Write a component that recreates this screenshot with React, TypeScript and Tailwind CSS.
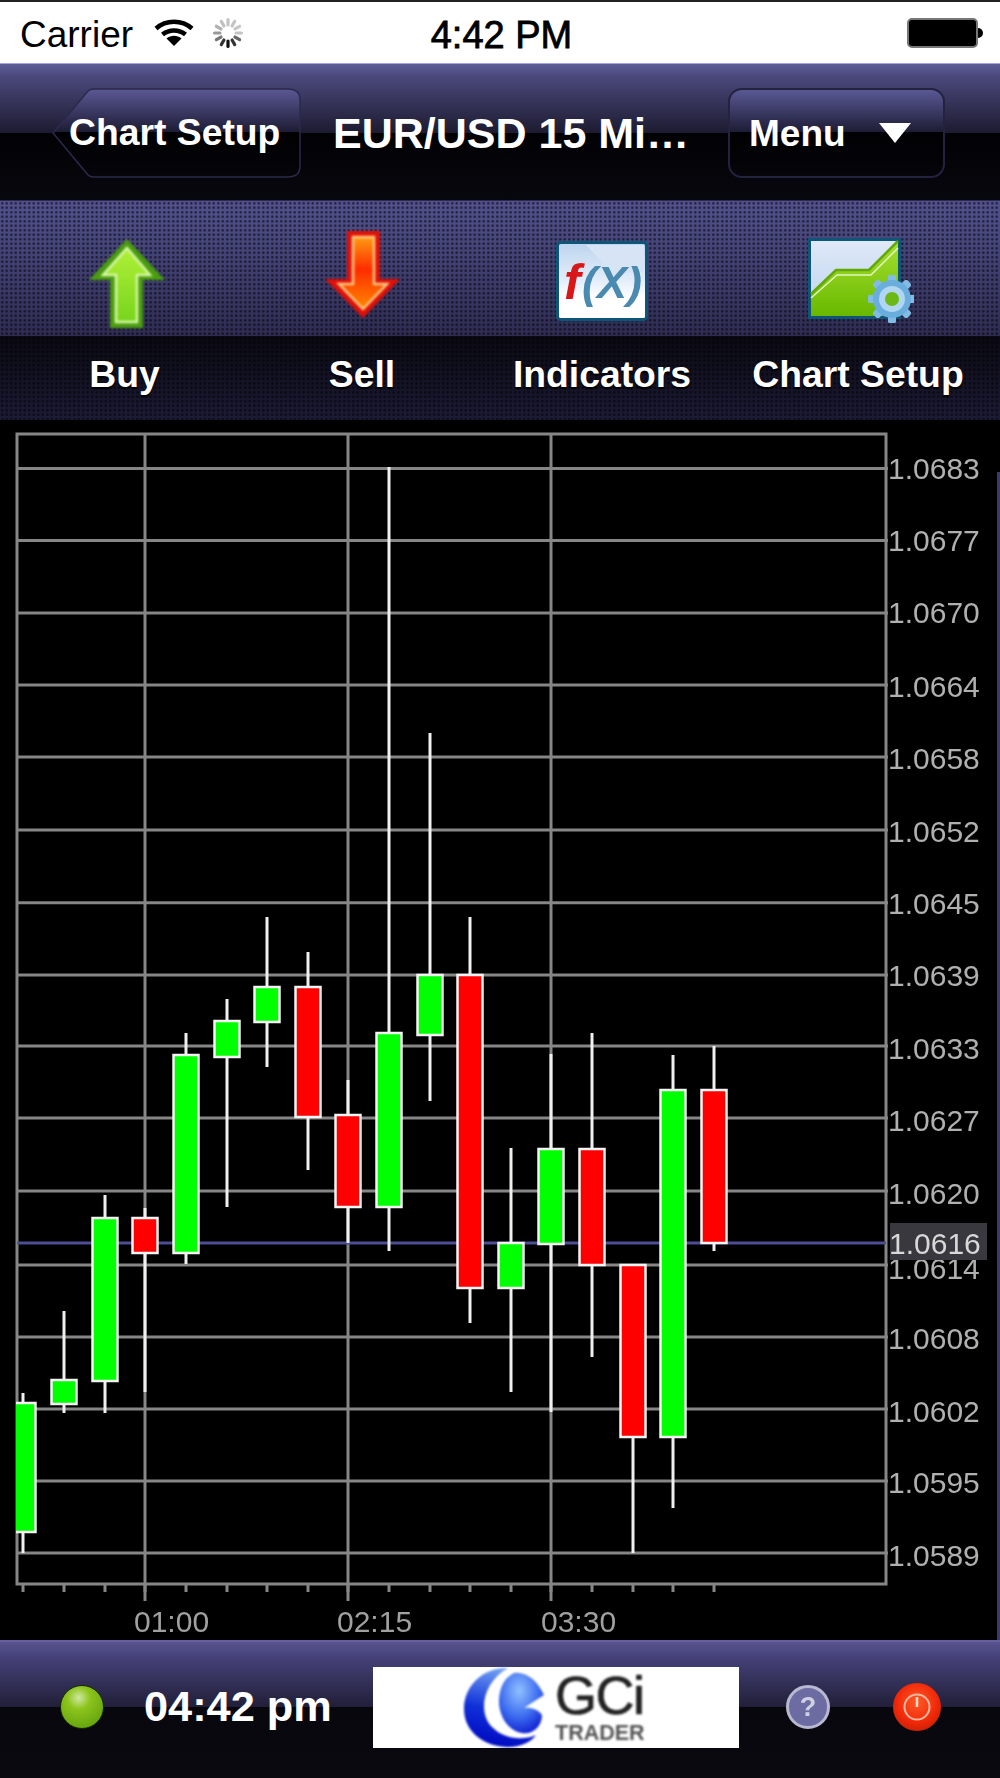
// label, line y, label baseline y
const LEVELS: [string, number, number][] = [
  ['1.0683', 468.5, 479],
  ['1.0677', 540.5, 551],
  ['1.0670', 613, 623],
  ['1.0664', 685, 697],
  ['1.0658', 757, 769],
  ['1.0652', 830, 841.5],
  ['1.0645', 902.7, 913.5],
  ['1.0639', 975, 986],
  ['1.0633', 1046, 1059],
  ['1.0627', 1118, 1131],
  ['1.0620', 1191, 1204],
  ['1.0614', 1265, 1279],
  ['1.0608', 1337, 1349],
  ['1.0602', 1409, 1422],
  ['1.0595', 1481, 1493],
  ['1.0589', 1553, 1566],
];

const TICKS = [23, 64, 105, 145, 186, 227, 267, 308, 348, 389, 430, 470, 511, 551, 592, 633, 673, 714];

// x, body top, body bottom, wick top, wick bottom, rising
const CANDLES: [number, number, number, number, number, boolean][] = [
  [23, 1403, 1532, 1393, 1553, true],
  [64, 1380, 1404, 1311, 1413, true],
  [105, 1218, 1381, 1195, 1413, true],
  [145, 1218, 1253, 1208, 1392, false],
  [186, 1055, 1253, 1033, 1264, true],
  [227, 1021, 1057, 999, 1207, true],
  [267, 987, 1022, 917, 1067, true],
  [308, 987, 1117, 952, 1170, false],
  [348, 1115, 1207, 1080, 1243, false],
  [389, 1033, 1207, 467, 1251, true],
  [430, 975, 1035, 733, 1101, true],
  [470, 975, 1288, 917, 1323, false],
  [511, 1243, 1288, 1148, 1392, true],
  [551, 1149, 1244, 1054, 1412, true],
  [592, 1149, 1265, 1033, 1357, false],
  [633, 1265, 1437, 1265, 1553, false],
  [673, 1090, 1437, 1055, 1508, true],
  [714, 1090, 1243, 1046, 1251, false],
];

function Wifi() {
  return (
    <svg width="40" height="30" viewBox="0 0 40 30">
      <path d="M2 10.5C12 1.5 28 1.5 38 10.5" fill="none" stroke="#000" strokeWidth="4.5" />
      <path d="M8.5 16.5C15 11 25 11 31.5 16.5" fill="none" stroke="#000" strokeWidth="4.5" />
      <path d="M12.5 20.5C17 16.8 23 16.8 27.5 20.5L20 28Z" fill="#000" />
    </svg>
  );
}

function Spinner() {
  const greys = ['#c4c4c4', '#c4c4c4', '#c8c8c8', '#c4c4c4', '#666', '#333', '#111', '#333', '#777', '#999', '#b0b0b0', '#c0c0c0'];
  return (
    <svg width="32" height="32" viewBox="0 0 32 32">
      {greys.map((c, i) => (
        <rect key={i} x="14.4" y="1" width="3.2" height="8.5" rx="1.6" fill={c} transform={`rotate(${i * 30} 16 16)`} />
      ))}
    </svg>
  );
}

function StatusBar() {
  return (
    <div className="grid h-[63px] grid-cols-3 items-center border-t-2 border-[#222] bg-white pl-[20px] pr-[17px] font-['Liberation_Sans',sans-serif] text-black">
      <div className="flex items-center">
        <span className="pt-[4px] text-[37px] leading-none">Carrier</span>
        <span className="ml-[21px]"><Wifi /></span>
        <span className="ml-[18px]"><Spinner /></span>
      </div>
      <div className="pt-[4px] text-center text-[38px] leading-none [-webkit-text-stroke:0.8px_#000]">4:42 PM</div>
      <div className="flex items-center justify-end">
        <div className="h-[30px] w-[71px] rounded-[5px] border-2 border-[#777] bg-black" />
        <div className="h-[10px] w-[5px] rounded-r-full bg-black" />
      </div>
    </div>
  );
}

function NavBar() {
  return (
    <div className="flex h-[137px] items-center border-t border-[#a8a6d8] bg-[linear-gradient(to_bottom,#5f5d98_0,#4b497c_12px,#1c1b30_69px,#020205_69px,#07070e_100%)] pl-[52px] pr-[55px] pt-[2px] font-['Liberation_Sans',sans-serif] font-bold text-white">
      <div className="relative flex h-[90px] w-[249px] items-center pl-[17px]">
        <svg className="absolute inset-0" width="249" height="90" viewBox="0 0 249 90">
          <defs>
            <linearGradient id="btnfill" x1="0" y1="0" x2="0" y2="1">
              <stop offset="0" stopColor="#5a5894" />
              <stop offset="0.49" stopColor="#1d1c34" />
              <stop offset="0.49" stopColor="#010103" />
              <stop offset="1" stopColor="#05050a" />
            </linearGradient>
          </defs>
          <path
            d="M1 45L36 3Q38 1 42 1H236Q248 1 248 12V78Q248 89 236 89H42Q38 89 36 87Z"
            fill="url(#btnfill)"
            stroke="#2b2a4c"
            strokeWidth="1.5"
          />
        </svg>
        <span className="relative text-[37.3px] leading-none">Chart Setup</span>
      </div>
      <div className="ml-[32px] text-[43px] leading-none">EUR/USD 15 Mi…</div>
      <div className="ml-auto flex h-[90px] w-[217px] items-center rounded-[14px] border-2 border-[#24233f] bg-[linear-gradient(to_bottom,#5a5894_0,#1d1c34_49%,#010103_49%,#05050a_100%)] pl-[19px]">
        <span className="text-[37px] leading-none">Menu</span>
        <svg className="ml-[33px]" width="32" height="20" viewBox="0 0 32 20">
          <path d="M0 0H32L16 20Z" fill="#fff" />
        </svg>
      </div>
    </div>
  );
}

function BuyIcon() {
  return (
    <svg className="mt-[38px] ml-[5px] blur-[0.8px]" width="76" height="89" viewBox="0 0 76 89">
      <defs>
        <linearGradient id="buyfill" x1="0" y1="0" x2="0" y2="1">
          <stop offset="0" stopColor="#b0f038" />
          <stop offset="1" stopColor="#78d41c" />
        </linearGradient>
      </defs>
      <path d="M38 0L76 41H54V89H21V41H0Z" fill="#4a9c10" />
      <path d="M38 9L61 36H48V83H27V36H14Z" fill="url(#buyfill)" stroke="#d8f8a8" strokeWidth="2.5" />
    </svg>
  );
}

function SellIcon() {
  return (
    <svg className="mt-[30px] blur-[0.8px]" width="75" height="87" viewBox="0 0 75 87">
      <defs>
        <linearGradient id="sellfill" x1="0" y1="0" x2="0" y2="1">
          <stop offset="0" stopColor="#ff9a10" />
          <stop offset="0.45" stopColor="#ff2c00" />
          <stop offset="1" stopColor="#ff8800" />
        </linearGradient>
      </defs>
      <path d="M22 0H55V48H75L38 87L0 48H22Z" fill="#e01008" />
      <path d="M28 6H49V53H62L38 78L14 53H28Z" fill="url(#sellfill)" stroke="#ffc880" strokeWidth="2.5" />
    </svg>
  );
}

function FxIcon() {
  return (
    <svg className="mt-[40px] blur-[0.7px]" width="92" height="80" viewBox="0 0 92 80">
      <defs>
        <linearGradient id="fxfill" x1="0" y1="0" x2="0" y2="1">
          <stop offset="0" stopColor="#bcd4ee" />
          <stop offset="0.5" stopColor="#e4eefa" />
          <stop offset="0.72" stopColor="#ffffff" />
        </linearGradient>
      </defs>
      <rect x="1.5" y="1.5" width="89" height="77" rx="3" fill="url(#fxfill)" stroke="#0e5578" strokeWidth="3" />
      <path d="M30 4L58 34L88 30V4Z" fill="#d6e4f6" />
      <text x="8" y="58" fontFamily="'Liberation Sans',sans-serif" fontStyle="italic" fontWeight="700" fontSize="50" fill="#d81818">f</text>
      <text x="26" y="57" fontFamily="'Liberation Sans',sans-serif" fontStyle="italic" fontSize="45" fill="#4a8ab0">(X)</text>
    </svg>
  );
}

function ChartIcon() {
  const teeth = [0, 45, 90, 135, 180, 225, 270, 315];
  return (
    <svg className="mt-[37px] ml-[6px] blur-[0.7px]" width="106" height="86" viewBox="0 0 106 86">
      <defs>
        <linearGradient id="skyfill" x1="0" y1="0" x2="0" y2="1">
          <stop offset="0" stopColor="#dfe9f8" />
          <stop offset="1" stopColor="#bcd2ee" />
        </linearGradient>
        <linearGradient id="grassfill" x1="0" y1="0" x2="0" y2="1">
          <stop offset="0" stopColor="#a6e030" />
          <stop offset="1" stopColor="#68b800" />
        </linearGradient>
      </defs>
      <rect x="1.5" y="1.5" width="90" height="78" fill="url(#skyfill)" stroke="#0e5578" strokeWidth="3" />
      <path d="M3 56L28 32H61L90 3V78H3Z" fill="url(#grassfill)" />
      <path d="M3 56L28 32H61L90 3" fill="none" stroke="#62a808" strokeWidth="2.5" />
      <path d="M3 60L29 37H63L90 10" fill="none" stroke="#e4f6c0" strokeWidth="1.5" />
      <g>
        {teeth.map((a) => (
          <rect key={a} x="80" y="37" width="8" height="48" rx="2" fill="#82bce6" transform={`rotate(${a} 84 61)`} />
        ))}
        <circle cx="84" cy="61" r="19" fill="#6aaede" />
        <circle cx="84" cy="61" r="13" fill="#b0d6f2" />
        <circle cx="84" cy="61" r="7" fill="#6cb814" />
      </g>
    </svg>
  );
}

function Toolbar() {
  const items = [
    { label: 'Buy', icon: <BuyIcon /> },
    { label: 'Sell', icon: <SellIcon /> },
    { label: 'Indicators', icon: <FxIcon /> },
    { label: 'Chart Setup', icon: <ChartIcon /> },
  ];
  return (
    <div className="grid h-[220px] grid-cols-[249px_226px_254px_258px] border-t border-[#2c2a50] bg-[radial-gradient(circle,rgba(0,0,0,0.55)_1px,transparent_1.5px),linear-gradient(to_bottom,#53528e_0,#2e2c52_135px,#0a0912_135px,#1d1b36_100%)] [background-size:4.5px_4.5px,100%_100%] font-['Liberation_Sans',sans-serif] font-bold text-white">
      {items.map((item) => (
        <div key={item.label} className="flex flex-col items-center">
          <div className="flex h-[151px] items-start">{item.icon}</div>
          <div className="text-[37.3px] leading-[44px] [text-shadow:0_2px_2px_#000]">{item.label}</div>
        </div>
      ))}
    </div>
  );
}

function Chart() {
  const grid = '#868686';
  const font = "'Liberation Sans',sans-serif";
  return (
    <div className="h-[1220px] bg-black">
      <svg className="block blur-[0.7px]" width="1000" height="1220" viewBox="0 420 1000 1220">
        <defs>
          <clipPath id="plot">
            <rect x="16" y="420" width="880" height="1220" />
          </clipPath>
        </defs>
        <rect x="997" y="472" width="3" height="1168" fill="#3a3a70" />
        <rect x="17" y="434" width="869" height="1150" fill="none" stroke={grid} strokeWidth="3" />
        {LEVELS.map(([label, y]) => (
          <line key={label} x1="17" x2="888" y1={y} y2={y} stroke={grid} strokeWidth="3" />
        ))}
        {[145, 348, 551].map((x) => (
          <line key={x} x1={x} x2={x} y1="434" y2="1601" stroke={grid} strokeWidth="3" />
        ))}
        {TICKS.map((x) => (
          <line key={x} x1={x} x2={x} y1="1584" y2="1592" stroke={grid} strokeWidth="3" />
        ))}
        <line x1="17" x2="886" y1="1243" y2="1243" stroke="#4d4d94" strokeWidth="3" />
        <g clipPath="url(#plot)">
          {CANDLES.map(([x, top, bottom, wickTop, wickBottom, rising]) => (
            <g key={x}>
              <line x1={x} x2={x} y1={wickTop} y2={wickBottom} stroke="#f0f0f0" strokeWidth="3" />
              <rect
                x={x - 12.5}
                y={top}
                width="25"
                height={bottom - top}
                fill={rising ? '#00ff00' : '#ff0000'}
                stroke="#f4f4f4"
                strokeWidth="2.5"
              />
            </g>
          ))}
        </g>
        {LEVELS.map(([label, , baseline]) => (
          <text key={label} x="888" y={baseline} fontFamily={font} fontSize="30" fill="#b0b0b0">
            {label}
          </text>
        ))}
        <rect x="890" y="1223" width="97" height="37" fill="#38383e" />
        <text x="889" y="1254" fontFamily={font} fontSize="30" fill="#d8d8d8">1.0616</text>
        <text x="134" y="1632" fontFamily={font} fontSize="30" fill="#a0a0a0">01:00</text>
        <text x="337" y="1632" fontFamily={font} fontSize="30" fill="#a0a0a0">02:15</text>
        <text x="541" y="1632" fontFamily={font} fontSize="30" fill="#a0a0a0">03:30</text>
      </svg>
    </div>
  );
}

function Logo() {
  return (
    <div className="ml-[41px] flex h-[81px] w-[366px] items-center bg-white pl-[91px] font-['Liberation_Sans',sans-serif] font-normal">
      <svg className="blur-[1px]" width="80" height="80" viewBox="0 0 80 80">
        <defs>
          <linearGradient id="swirlring" x1="0.6" y1="0" x2="0.4" y2="1">
            <stop offset="0" stopColor="#78a8f4" />
            <stop offset="0.55" stopColor="#1030d8" />
            <stop offset="1" stopColor="#0008c0" />
          </linearGradient>
          <radialGradient id="swirlblob" cx="0.45" cy="0.3" r="0.75">
            <stop offset="0" stopColor="#90c0ff" />
            <stop offset="0.55" stopColor="#4070f0" />
            <stop offset="1" stopColor="#0c1cd0" />
          </radialGradient>
        </defs>
        <path d="M44 1C20 0 0 18 0 42C0 66 22 80 44 80C58 80 68 74 72 68C58 74 40 72 28 60C14 46 18 16 44 1Z" fill="url(#swirlring)" />
        <path d="M50 6C62 4 74 14 80 28L60 41C66 40 74 42 78 48C78 60 68 68 58 66C44 64 34 48 35 32C36 18 42 10 50 6Z" fill="url(#swirlblob)" />
      </svg>
      <div className="ml-[11px] flex flex-col blur-[0.8px]">
        <span className="text-[54px] leading-[46px] tracking-[-1.5px] text-[#222] [-webkit-text-stroke:0.7px_#222]">GCi</span>
        <span className="mt-[5px] text-[21.5px] leading-[20px] font-bold text-[#555]">TRADER</span>
      </div>
    </div>
  );
}

function BottomBar() {
  return (
    <div className="flex h-[138px] items-center border-t-2 border-[#67609e] bg-[linear-gradient(to_bottom,#59548f_0,#46427a_14px,#211f38_65px,#07070d_65px,#09090f_100%)] pb-[6px] pl-[60px] font-['Liberation_Sans',sans-serif] font-bold text-white">
      <div className="h-[44px] w-[44px] rounded-full border border-[#1a2a08] bg-[radial-gradient(circle_at_42%_28%,#cfe8a0_0,#8cc41c_30%,#6aa810_75%,#4c8008_100%)] blur-[0.4px]" />
      <div className="ml-[40px] w-[188px] text-[43.3px] leading-none">04:42 pm</div>
      <Logo />
      <div className="ml-[47px] flex h-[44px] w-[44px] items-center justify-center rounded-full border-[3px] border-[#b8b8d0] bg-[#6c6ca2] text-[27px] leading-none text-[#d0d0e4] blur-[0.6px]">?</div>
      <div className="ml-[63px] flex h-[48px] w-[48px] items-center justify-center rounded-full bg-[radial-gradient(circle_at_50%_40%,#ff5a28_0,#f02808_55%,#a81a08_100%)] blur-[0.6px]">
        <svg width="30" height="30" viewBox="0 0 30 30">
          <circle cx="15" cy="15" r="12.5" fill="none" stroke="#ffb8a0" strokeWidth="2" />
          <line x1="15" y1="5" x2="15" y2="15" stroke="#ffd8c8" strokeWidth="2.5" />
        </svg>
      </div>
    </div>
  );
}

export default function App() {
  return (
    <div className="h-[1778px] w-[1000px] overflow-hidden bg-black">
      <StatusBar />
      <NavBar />
      <Toolbar />
      <Chart />
      <BottomBar />
    </div>
  );
}
